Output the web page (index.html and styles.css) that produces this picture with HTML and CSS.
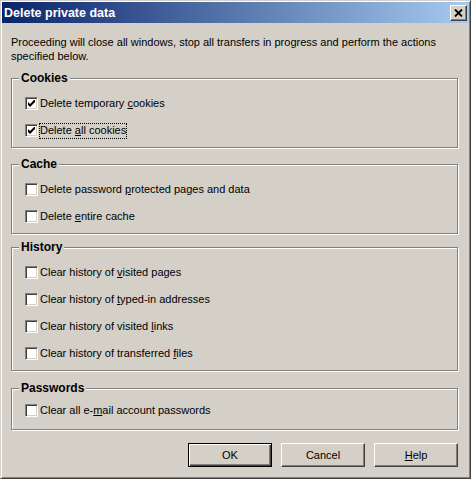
FILE: index.html
```html
<!DOCTYPE html>
<html>
<head>
<meta charset="utf-8">
<title>Delete private data</title>
<link rel="stylesheet" href="styles.css">
</head>
<body>
<div class="window">
  <div class="titlebar">
    <span class="title">Delete private data</span>
    <span class="close"><svg width="9" height="8" viewBox="0 0 9 8"><path d="M1 0.5 L8 7.5 M8 0.5 L1 7.5" stroke="#000" stroke-width="1.8" fill="none"/></svg></span>
  </div>
  <div class="body">
    <p class="intro">Proceeding will close all windows, stop all transfers in progress and perform the actions<br>specified below.</p>

    <div class="group g-cookies">
      <div class="legend">Cookies</div>
      <div class="rows">
        <div class="row"><span class="cb"><svg width="7" height="7" viewBox="0 0 7 7"><path d="M0 2 L2 4 L7 -1 L7 2 L2 7 L0 5 Z" fill="#000"/></svg></span><span class="lbl">Delete temporary <u>c</u>ookies</span></div>
        <div class="row"><span class="cb"><svg width="7" height="7" viewBox="0 0 7 7"><path d="M0 2 L2 4 L7 -1 L7 2 L2 7 L0 5 Z" fill="#000"/></svg></span><span class="lbl focus">Delete <u>a</u>ll cookies</span></div>
      </div>
    </div>

    <div class="group g-cache">
      <div class="legend">Cache</div>
      <div class="rows">
        <div class="row"><span class="cb"></span><span class="lbl">Delete password <u>p</u>rotected pages and data</span></div>
        <div class="row"><span class="cb"></span><span class="lbl">Delete <u>e</u>ntire cache</span></div>
      </div>
    </div>

    <div class="group g-history">
      <div class="legend">History</div>
      <div class="rows">
        <div class="row"><span class="cb"></span><span class="lbl">Clear history of <u>v</u>isited pages</span></div>
        <div class="row"><span class="cb"></span><span class="lbl">Clear history of <u>t</u>yped-in addresses</span></div>
        <div class="row"><span class="cb"></span><span class="lbl">Clear history of visited <u>l</u>inks</span></div>
        <div class="row"><span class="cb"></span><span class="lbl">Clear history of transferred <u>f</u>iles</span></div>
      </div>
    </div>

    <div class="group g-passwords">
      <div class="legend">Passwords</div>
      <div class="rows">
        <div class="row"><span class="cb"></span><span class="lbl">Clear all e-<u>m</u>ail account passwords</span></div>
      </div>
    </div>

    <div class="buttons">
      <span class="btn default">OK</span>
      <span class="btn">Cancel</span>
      <span class="btn"><span><u>H</u>elp</span></span>
    </div>
  </div>
</div>
</body>
</html>
```

FILE: styles.css
```css
html, body {
  margin: 0;
  padding: 0;
}
body {
  background: #d4d0c8;
  font-family: "Liberation Sans", Arial, sans-serif;
  font-size: 11px;
  color: #000;
}
.window {
  width: 471px;
  height: 479px;
  box-sizing: border-box;
  border: 1px solid;
  border-color: #d4d0c8 #404040 #404040 #d4d0c8;
  box-shadow: inset 1px 1px 0 #fff, inset -1px -1px 0 #808080;
  padding: 1px;
  background: #d4d0c8;
}
.titlebar {
  height: 21px;
  display: flex;
  align-items: center;
  justify-content: space-between;
  background: linear-gradient(to right, #0a246a, #a6caf0);
  padding: 0 2px 0 2px;
}
.title {
  color: #fff;
  font-weight: bold;
  font-size: 12.5px;
}
.close {
  width: 17px;
  height: 16px;
  box-sizing: border-box;
  background: #d4d0c8;
  border: 1px solid;
  border-color: #fff #404040 #404040 #fff;
  box-shadow: inset -1px -1px 0 #808080;
  display: flex;
  align-items: center;
  justify-content: center;
}
.close svg { display: block; }
.body {
  padding: 12px 11px 0 9px;
}
.intro {
  margin: 0;
  line-height: 14px;
  white-space: nowrap;
}
.group {
  border: 1px solid #808080;
  box-shadow: inset 1px 1px 0 #fff, 1px 1px 0 #fff;
  padding: 0 0 3px 13px;
}
.g-cookies { margin-top: 15px; }
.g-cache { margin-top: 16px; }
.g-history { margin-top: 13px; }
.g-passwords { margin-top: 17px; padding-bottom: 5px; }
.g-passwords .rows { margin-top: 2px; }
.legend {
  width: fit-content;
  margin: -8px 0 0 -6px;
  padding: 0 2px;
  background: #d4d0c8;
  font-weight: bold;
  font-size: 12px;
  line-height: 14px;
}
.rows {
  margin-top: 5px;
}
.row {
  display: flex;
  align-items: center;
  height: 27px;
}
.cb {
  width: 13px;
  height: 13px;
  box-sizing: border-box;
  background: #fff;
  border: 1px solid;
  border-color: #808080 #fff #fff #808080;
  box-shadow: inset 1px 1px 0 #404040, inset -1px -1px 0 #d4d0c8;
  display: flex;
  align-items: center;
  justify-content: center;
  flex: none;
}
.cb svg { display: block; }
.lbl {
  margin-left: 1px;
  padding: 1px 1px 2px 1px;
  line-height: 13px;
}
.lbl.focus {
  outline: 1px dotted #000;
  outline-offset: -1px;
}
.buttons {
  display: flex;
  justify-content: flex-end;
  gap: 9px;
  margin-top: 13px;
}
.btn {
  width: 84px;
  height: 24px;
  box-sizing: border-box;
  border: 1px solid;
  border-color: #fff #404040 #404040 #fff;
  box-shadow: inset -1px -1px 0 #808080, inset 1px 1px 0 #d4d0c8;
  display: flex;
  align-items: center;
  justify-content: center;
  font-size: 11px;
}
.btn.default {
  border-color: #000;
  box-shadow: inset 1px 1px 0 #fff, inset -1px -1px 0 #404040, inset -2px -2px 0 #808080;
}
```
